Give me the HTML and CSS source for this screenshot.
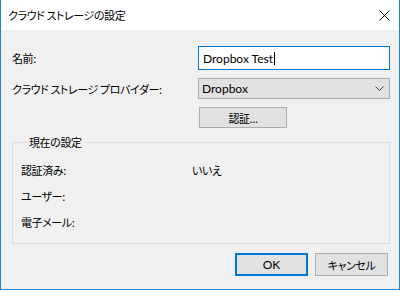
FILE: index.html
```html
<!DOCTYPE html>
<html lang="ja">
<head>
<meta charset="utf-8">
<title>クラウド ストレージの設定</title>
<link rel="stylesheet" href="styles.css">
</head>
<body>
<div class="window">
  <div class="titlebar">
    <span class="title">クラウド ストレージの設定</span>
    <svg class="close" width="11" height="11" viewBox="0 0 11 11"><path d="M0.5 0.5 L10.5 10.5 M10.5 0.5 L0.5 10.5" stroke="#000" stroke-width="1" fill="none"/></svg>
  </div>
  <div class="content">
    <div class="form">
      <label class="label">名前:</label>
      <div class="textbox"><span class="latin">Dropbox Test</span><span class="caret"></span></div>
      <label class="label">クラウド ストレージ プロバイダー:</label>
      <div class="combo"><span class="latin">Dropbox</span>
        <svg class="chev" width="9" height="5" viewBox="0 0 9 5"><path d="M0.5 0.5 L4.5 4.5 L8.5 0.5" stroke="#444" stroke-width="1" fill="none"/></svg>
      </div>
      <div></div>
      <div class="btn auth">認証...</div>
    </div>
    <fieldset class="group">
      <legend class="legend">現在の設定</legend>
      <div class="info">
        <span>認証済み:</span><span>いいえ</span>
        <span>ユーザー:</span><span></span>
        <span>電子メール:</span><span></span>
      </div>
    </fieldset>
    <div class="actions">
      <div class="btn ok latin">OK</div>
      <div class="btn cancel">キャンセル</div>
    </div>
  </div>
</div>
</body>
</html>
```
FILE: styles.css
```css
html, body {
  margin: 0;
  padding: 0;
}
body {
  width: 400px;
  height: 290px;
  font-family: "Noto Sans CJK JP", sans-serif;
  font-size: 11px;
  font-feature-settings: "palt";
  letter-spacing: -0.4px;
  color: #000;
}
.window {
  box-sizing: border-box;
  width: 400px;
  height: 290px;
  background: #f0f0f0;
  border: 1px solid #1a84d8;
  border-top: 0;
  display: flex;
  flex-direction: column;
}
.titlebar {
  height: 30px;
  flex: none;
  background: #fff;
  display: flex;
  align-items: center;
  justify-content: space-between;
  padding: 0 9px 0 7px;
}
.title {
  line-height: 16px;
}
.close {
  display: block;
  margin-top: 1px;
}
.latin {
  font-family: "Lato", "Noto Sans CJK JP", sans-serif;
  font-size: 12px;
  letter-spacing: 0;
}
.content {
  padding: 16px 9px 0 11px;
  display: flex;
  flex-direction: column;
}
.form {
  display: grid;
  grid-template-columns: 186px 192px;
  grid-template-rows: 24px 21px 21px;
  row-gap: 8px;
  align-items: center;
}
.label {
  line-height: 16px;
  white-space: nowrap;
}
.textbox {
  box-sizing: border-box;
  height: 24px;
  border: 1px solid #0078d7;
  background: #fff;
  display: flex;
  align-items: center;
  padding-left: 4px;
}
.caret {
  width: 0;
  height: 13px;
  border-left: 1px solid #000;
  margin-left: 1px;
}
.combo {
  box-sizing: border-box;
  height: 21px;
  border: 1px solid #adadad;
  background: #e1e1e1;
  display: flex;
  align-items: center;
  justify-content: space-between;
  padding: 0 5px 0 3px;
}
.chev {
  display: block;
}
.btn {
  box-sizing: border-box;
  height: 21px;
  border: 1px solid #adadad;
  background: #e1e1e1;
  display: flex;
  align-items: center;
  justify-content: center;
}
.auth {
  width: 88px;
  margin-left: 1px;
}
.group {
  margin: 6px 0 0 0;
  padding: 12px 0 13px 8px;
  border: 1px solid #dcdcdc;
  min-width: 0;
}
.legend {
  margin-left: 6px;
  padding: 0 2px;
  line-height: 16px;
}
.info {
  display: grid;
  grid-template-columns: 171px 1fr;
  row-gap: 10px;
  line-height: 16px;
}
.actions {
  margin-top: 9px;
  display: flex;
  justify-content: flex-end;
  gap: 7px;
  padding-right: 2px;
}
.ok, .cancel {
  width: 73px;
  height: 23px;
}
.ok {
  border: 2px solid #0078d7;
}
```
